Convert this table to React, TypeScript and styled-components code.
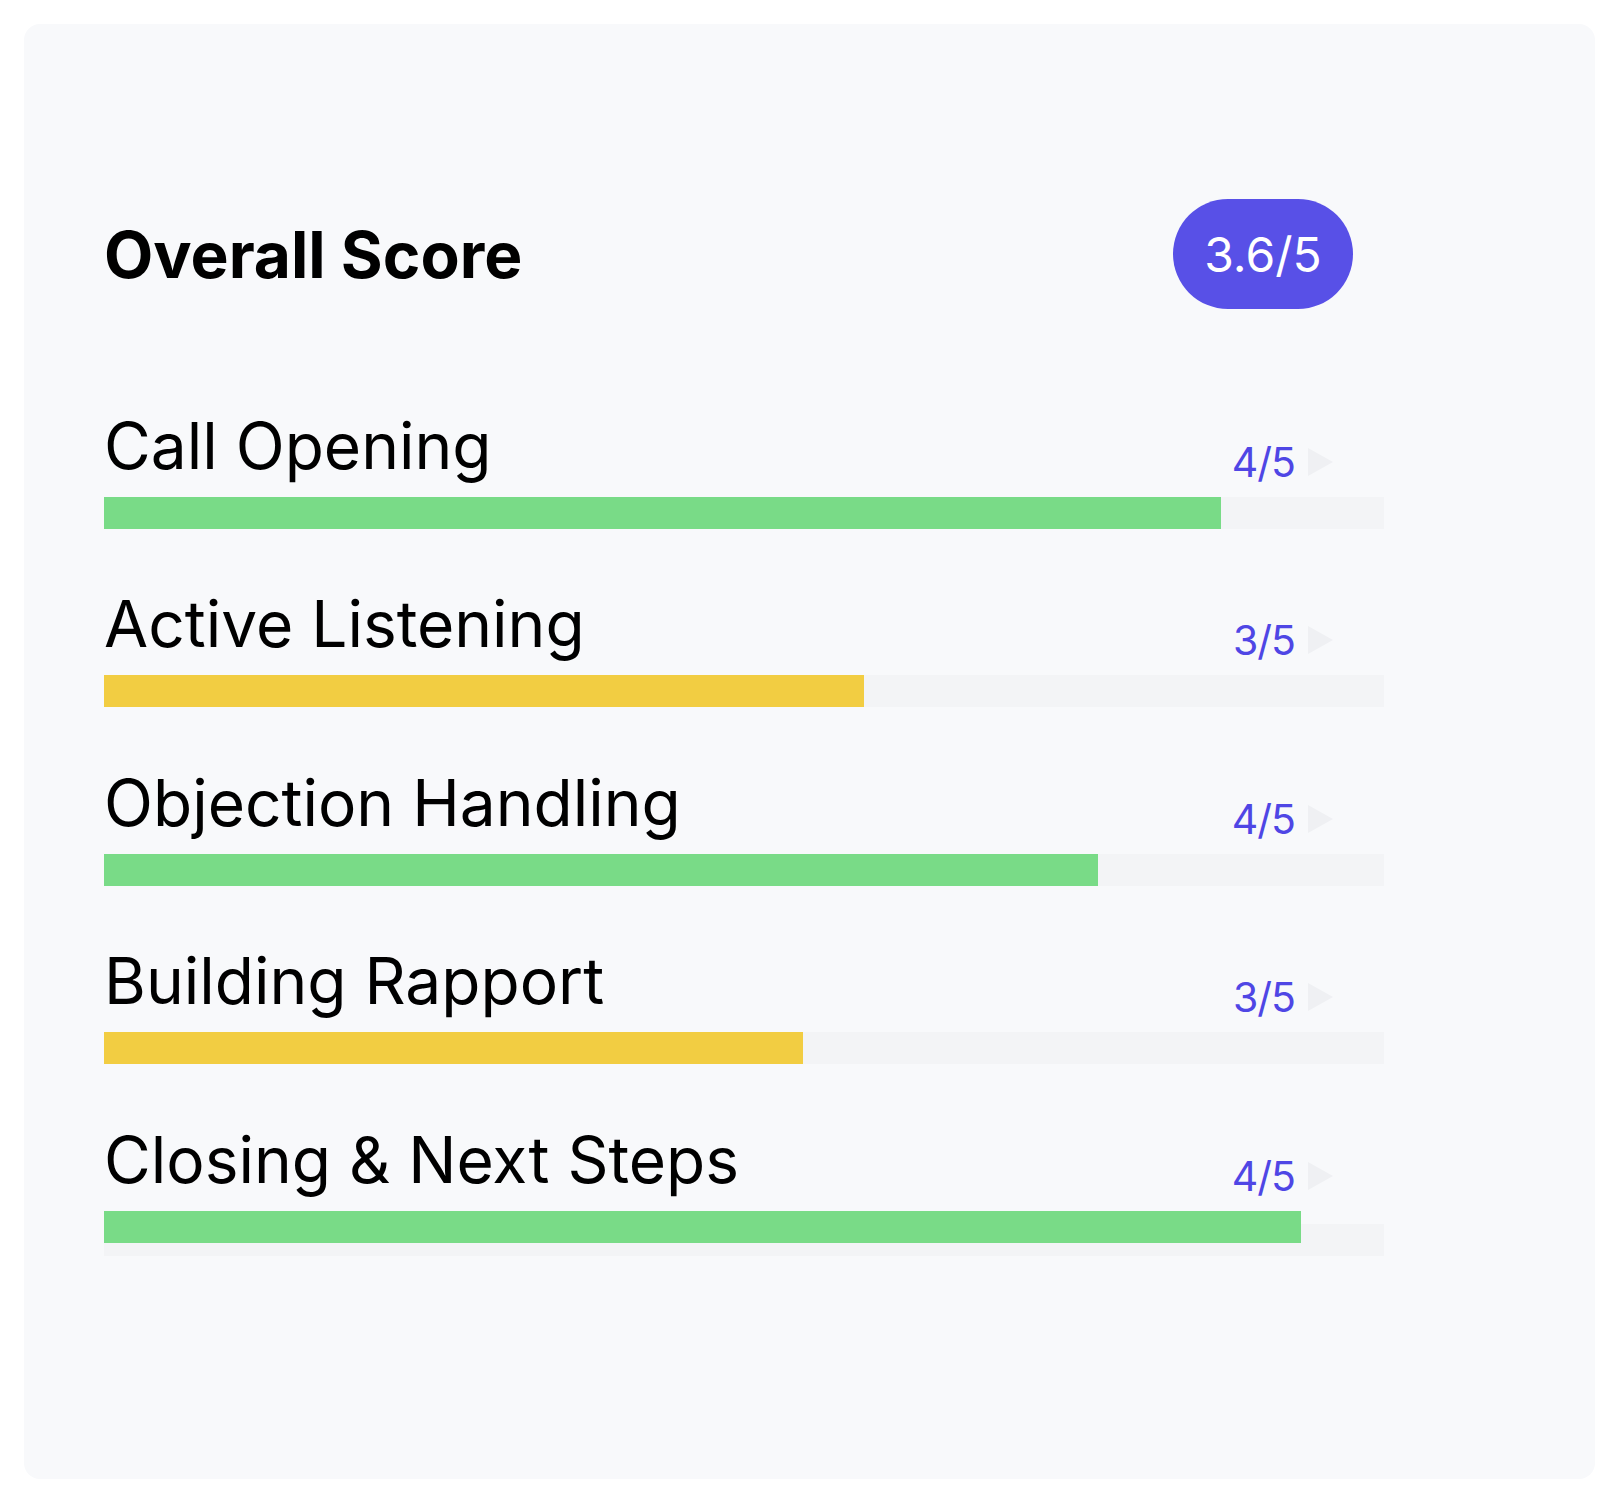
import styled, { createGlobalStyle } from "styled-components";

const GlobalStyle = createGlobalStyle`
  html, body {
    margin: 0;
    padding: 0;
    background: #ffffff;
  }
  body {
    font-family: Inter, "Liberation Sans", sans-serif;
    color: #000000;
  }
`;

const Page = styled.div`
  padding: 24px;
`;

const Card = styled.section`
  background: #f8f9fb;
  border-radius: 16px;
  padding: 175px 80px 223px 80px;
`;

const Content = styled.div`
  width: 1280px;
`;

const Header = styled.header`
  display: flex;
  justify-content: space-between;
  align-items: center;
  padding-right: 31px;
  margin-bottom: 97.5px;
`;

const Title = styled.h2`
  margin: 0;
  font-size: 64px;
  font-weight: 700;
`;

const Badge = styled.div`
  display: flex;
  align-items: center;
  justify-content: center;
  height: 110px;
  width: 180px;
  border-radius: 55px;
  background: #5850e7;
  color: #ffffff;
  font-size: 48px;
`;

const List = styled.div`
  display: flex;
  flex-direction: column;
  gap: 56.5px;
`;

const Row = styled.div`
  display: flex;
  flex-direction: column;
`;

const RowHead = styled.div`
  display: flex;
  justify-content: space-between;
  align-items: flex-end;
  padding-right: 51px;
  margin-bottom: 13px;
`;

const Label = styled.span`
  font-size: 64px;
  line-height: normal;
`;

const Score = styled.span`
  display: flex;
  align-items: center;
  gap: 13px;
  margin-bottom: -3px;
  font-size: 41px;
  letter-spacing: -1px;
  color: #4f46e5;
`;

const Caret = styled.span`
  width: 0;
  height: 0;
  border-top: 14px solid transparent;
  border-bottom: 14px solid transparent;
  border-left: 25px solid #eff0f3;
`;

const Track = styled.div<{ $drop?: boolean }>`
  height: 32px;
  background: #f3f4f6;
  margin-top: ${(p) => (p.$drop ? "13px" : "0")};
`;

const Fill = styled.div<{ $tone: "good" | "fair"; $drop?: boolean }>`
  height: 100%;
  background: ${(p) => (p.$tone === "good" ? "#79db87" : "#f2cd42")};
  transform: ${(p) => (p.$drop ? "translateY(-13px)" : "none")};
`;

const skills = [
  { name: "Call Opening", score: 4, pct: 87.27 },
  { name: "Active Listening", score: 3, pct: 59.38 },
  { name: "Objection Handling", score: 4, pct: 77.66 },
  { name: "Building Rapport", score: 3, pct: 54.61 },
  { name: "Closing & Next Steps", score: 4, pct: 93.52 },
];

const App = () => {
  return (
    <>
      <GlobalStyle />
      <Page>
        <Card>
          <Content>
            <Header>
              <Title>Overall Score</Title>
              <Badge>3.6/5</Badge>
            </Header>

            <List>
              {skills.map((s, i) => {
                const last = i === skills.length - 1;
                return (
                  <Row key={s.name}>
                    <RowHead>
                      <Label>{s.name}</Label>
                      <Score>
                        {s.score}/5
                        <Caret />
                      </Score>
                    </RowHead>
                    <Track $drop={last}>
                      <Fill
                        $tone={s.score >= 4 ? "good" : "fair"}
                        $drop={last}
                        style={{ width: `${s.pct}%` }}
                      />
                    </Track>
                  </Row>
                );
              })}
            </List>
          </Content>
        </Card>
      </Page>
    </>
  );
};

export default App;
